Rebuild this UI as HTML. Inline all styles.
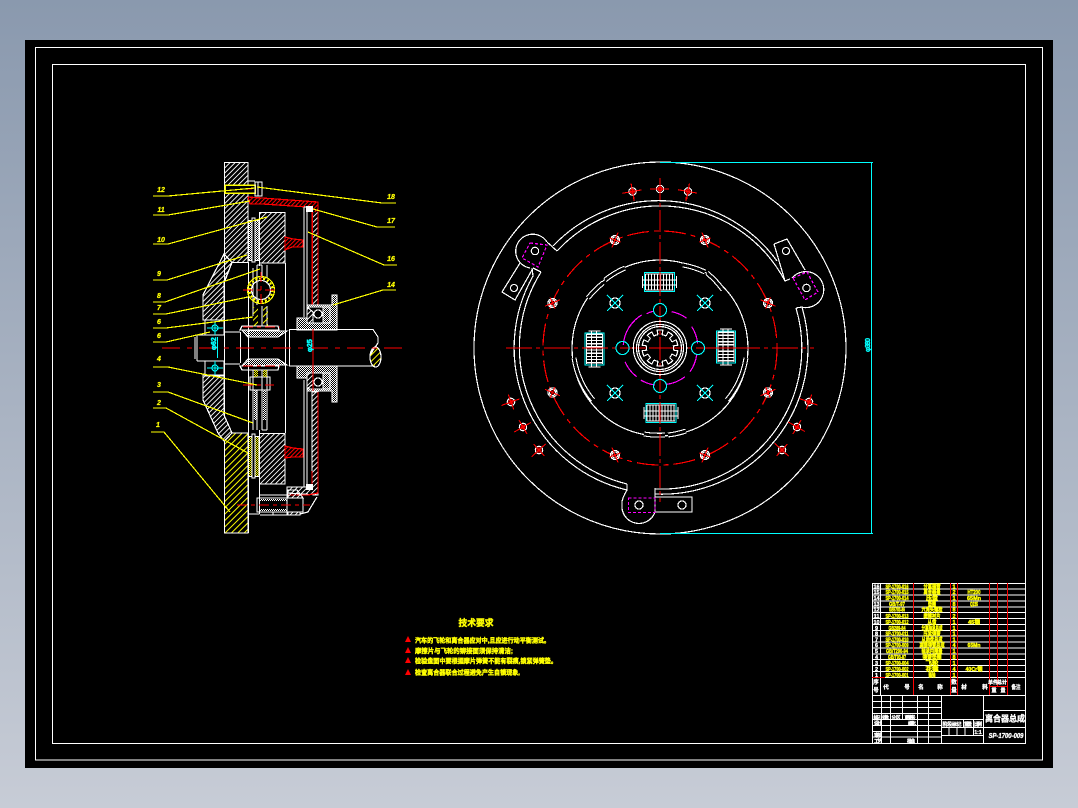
<!DOCTYPE html>
<html><head><meta charset="utf-8"><style>
html,body{margin:0;padding:0;width:1078px;height:808px;overflow:hidden;background:linear-gradient(#8a99ae,#c7ccd6)}
svg{position:absolute;left:0;top:0;display:block}
svg *{shape-rendering:crispEdges}
text{font-family:"Liberation Sans","Noto Sans CJK SC",sans-serif}
.y{fill:#ff0;stroke:#ff0;stroke-width:.4;font-weight:700;text-anchor:middle;font-size:5.5px}
.w{fill:#fff;stroke:#fff;stroke-width:.35;font-weight:700;text-anchor:middle;font-size:5.5px}
.l{fill:#ff0;stroke:#ff0;stroke-width:.25;font-weight:700;font-style:italic;text-anchor:middle;font-size:7px}
.t{fill:#ff0;stroke:#ff0;stroke-width:.4;font-weight:700;font-size:6.5px}
</style></head><body>
<svg width="1078" height="808" viewBox="0 0 1078 808" xmlns="http://www.w3.org/2000/svg">
<defs>
<pattern id="hw" width="3.6" height="3.6" patternUnits="userSpaceOnUse" patternTransform="rotate(45)"><line x1="0.5" y1="0" x2="0.5" y2="3.6" stroke="#fff" stroke-width="1.1"/></pattern>
<pattern id="hy" width="4.5" height="4.5" patternUnits="userSpaceOnUse" patternTransform="rotate(45)"><line x1="0.5" y1="0" x2="0.5" y2="4.5" stroke="#ff0" stroke-width="1.1"/></pattern>
<pattern id="hr" width="3" height="3" patternUnits="userSpaceOnUse" patternTransform="rotate(45)"><line x1="0.5" y1="0" x2="0.5" y2="3" stroke="#f00" stroke-width="1.3"/></pattern>
<pattern id="dw" width="2" height="2" patternUnits="userSpaceOnUse"><rect width="1" height="1" fill="#fff"/><rect x="1" y="1" width="1" height="1" fill="#fff"/></pattern>
<pattern id="dy" width="2" height="2" patternUnits="userSpaceOnUse"><rect width="1.2" height="1.2" fill="#ff0"/><rect x="1" y="1" width="1.2" height="1.2" fill="#ff0"/></pattern>
<g id="spr" fill="none">
<rect x="-15" y="-9.5" width="30" height="19" stroke="#0ff" stroke-width="1.2"/>
<path stroke="#fff" d="M-17-6V6M-14-8V8M-11-8V8M-8-8V8M-5-8V8M-2-8V8M1-8V8M4-8V8M7-8V8M10-8V8M13-8V8M17-6V6M-17-2H17M-17 3H17M-14-8H14M-14 8H14"/>
</g>
<g id="xm" fill="none"><circle r="5" stroke="#fff" stroke-width="1.2"/><path stroke="#0ff" stroke-width="1.1" d="M-6-6L6 6M-6 6L6-6M-8-8L-5-5M8-8L5-5M-8 8L-5 5M8 8L5 5"/></g>
<g id="bolt" fill="none"><circle r="4.5" stroke="#fff" stroke-width="1.2"/><circle r="3" stroke="#fff"/><path stroke="#f00" stroke-width="1.1" d="M-8 0H8M0-6V6"/></g>
<g id="hole" fill="none"><circle r="3.7" stroke="#fff" stroke-width="1.2"/><circle r="2" stroke="#f00"/><path stroke="#f00" stroke-width="1.1" d="M-10 0H9M0-8V8"/></g>
<path id="tooth" d="M-2.11-13.33L-2.82-17.78A18 18 0 0 1 2.82-17.78L2.11-13.33A13.5 13.5 0 0 1 6.13-12.03"/>
<path id="slots" d="M588 298A88 88 0 0 1 603 283M605 280A88 88 0 0 1 625 268M683 265A88 88 0 0 1 705 272M707 273A88 88 0 0 1 723 290M574 358A88 88 0 0 0 593 400M746 358A88 88 0 0 1 727 400M644 434A88 88 0 0 0 665 435M668 435A88 88 0 0 0 686 431"/>
</defs>
<rect x="25" y="40" width="1028" height="728" fill="#000"/>
<g fill="none" stroke="#fff">
<rect x="35.5" y="47.5" width="1007" height="712.5" stroke-width="1.2"/>
<rect x="52.5" y="64.5" width="973" height="679" stroke-width="1.2"/>
</g>

<!-- SECTION VIEW -->
<g stroke-width="1.2">
<!-- flywheel -->
<path d="M224.500 162.500H248V262.500H232L224.500 282Z" fill="url(#hw)" stroke="#fff"/>
<path d="M232 433H248V533H224.500V441Z" fill="url(#hy)" stroke="#fff"/>
<!-- cover hub -->
<path d="M224 254L203 295V320H224V282L232 262.500Z" fill="url(#hw)" stroke="#fff"/>
<path d="M203 375V400L218 433L224 441L232 433L224 415V375Z" fill="url(#hw)" stroke="#fff"/>
<!-- pressure plate -->
<rect x="259.500" y="212.500" width="25.500" height="50.500" fill="url(#hw)" stroke="#fff"/>
<rect x="259.500" y="433.500" width="25.500" height="50.500" fill="url(#hw)" stroke="#fff"/>
<!-- friction -->
<rect x="248.500" y="220.500" width="10.500" height="40" fill="url(#dw)" stroke="#fff"/>
<rect x="248.500" y="436.500" width="10.500" height="40" fill="url(#dy)" stroke="#fff"/>
<rect x="252" y="218" width="3" height="44" fill="#000" stroke="#fff"/>
<rect x="252" y="434" width="3" height="44" fill="#000" stroke="#fff"/>
<!-- verticals -->
<path fill="none" stroke="#fff" d="M248.500 262V436M224.500 282V415M285.500 263V433M259.500 263V266M259.500 484V514M248.500 514H259.500M248.500 476V533M259.500 430V436"/>
<!-- clutch cover -->
<path d="M248 197L262 198L290 200L318 202V305H312V212L307 207L262 204L250 204Z" fill="url(#hr)" stroke="#f00"/>
<rect x="312.500" y="212" width="5.500" height="93" fill="#000"/>
<rect x="312.500" y="212" width="5.500" height="93" fill="url(#hw)" stroke="none"/>
<path d="M312.500 212V305M318 202V305" fill="none" stroke="#f00"/>
<path d="M312 392V487H287V493L318 495L318 392Z" fill="url(#hw)" stroke="#fff"/>
<path d="M318 392V493L308 495H287M312 471V487" fill="none" stroke="#f00"/>
<path d="M300 514L308 512L317 497" fill="none" stroke="#fff"/>
<!-- red wedge -->
<path d="M285 237L293 239L303 240V247H292L285 250Z" fill="url(#hr)" stroke="#f00"/>
<path d="M285 446L293 448L303 449V457H292L285 458Z" fill="url(#hr)" stroke="#f00"/>
<!-- lever -->
<path fill="none" stroke="#fff" d="M304 207V317M307 207V317M304 207H307M304 380V487M307 380V487M304 487H307"/>
<rect x="306" y="206" width="7" height="6" fill="#fff"/>
<rect x="306" y="484" width="7" height="6" fill="#fff"/>
<!-- release bearing -->
<path d="M297 318V330H337V295H332V305H307V318Z" fill="url(#dw)" stroke="#fff"/>
<path d="M297 366V378H307V391H332V402H337V366Z" fill="url(#dw)" stroke="#fff"/>
<rect x="307" y="307" width="23" height="16" fill="#000" stroke="#fff"/>
<rect x="307" y="373" width="23" height="16" fill="#000" stroke="#fff"/>
<path d="M307 307L313 312V323H307Z" fill="url(#hw)" stroke="#fff"/>
<path d="M307 389L313 384V373H307Z" fill="url(#hw)" stroke="#fff"/>
<path d="M323 307H330V323H323Z" fill="url(#dw)" stroke="#fff"/>
<path d="M323 373H330V389H323Z" fill="url(#dw)" stroke="#fff"/>
<circle cx="318" cy="314" r="4" fill="#000" stroke="#fff"/>
<circle cx="318" cy="382" r="4" fill="#000" stroke="#fff"/>
<!-- shaft -->
<path fill="none" stroke="#fff" d="M289 329.500H373L378 337V343L373 350L370 356M289 366H375M289.500 329V366M197 335H224M224 332H240M197 361H224M224 364H240M195 337V359M197 335V361M240.500 332V363"/>
<ellipse cx="375.500" cy="357" rx="5.500" ry="10" fill="url(#hy)" stroke="#fff"/>
<!-- spline hub -->
<path d="M242 326H278L279 330H240Z" fill="none" stroke="#fff"/>
<path d="M242 370H278L279 366H240Z" fill="none" stroke="#fff"/>
<path d="M242 330L248 337H278L287 331H279Z" fill="url(#dw)" stroke="#fff"/>
<path d="M242 366L248 359H278L287 365H279Z" fill="url(#dw)" stroke="#fff"/>
<!-- hub flange -->
<path fill="none" stroke="#fff" d="M253 268V316M257 265V305M262 265V278M262 306V326M267 265V278M267 306V326M257 265H262M250 377H270V390H250ZM253 370V430M257 390V430M262 370V430M267 370V430M262 430H267"/>
<rect x="253" y="307" width="5" height="19" fill="url(#hy)"/><rect x="263" y="307" width="5" height="19" fill="url(#hy)"/>
<rect x="254" y="370" width="4" height="7" fill="url(#dy)"/><rect x="263" y="370" width="4" height="7" fill="url(#dy)"/>
<rect x="263" y="390" width="3" height="30" fill="url(#dw)"/>
<rect x="254" y="390" width="3" height="30" fill="url(#dw)"/>
<circle cx="261" cy="290" r="11.500" fill="none" stroke="#ff0" stroke-width="2.400" stroke-dasharray="2 2"/>
<circle cx="261" cy="290" r="9.500" fill="none" stroke="#fff"/>
<circle cx="261" cy="290" r="13.500" fill="none" stroke="#ff0"/>
<!-- bolt -->
<rect x="225" y="185" width="30" height="8" fill="#000" stroke="#ff0" stroke-width="1.500"/>
<path d="M255 182H262V196H255ZM258 182V196M248 181H255" fill="none" stroke="#fff"/>
<!-- lower bolt -->
<path fill="none" stroke="#fff" d="M257 498H303V512H257ZM260 495H287M260 515H299M287 490V515M297 490L287 490M273 512V515"/>
<path d="M288 490H297L303 498H288Z" fill="url(#hw)" stroke="#fff"/>
<path d="M288 512H300V515H288Z" fill="url(#hw)" stroke="#fff"/>
<rect x="260" y="499" width="27" height="2" fill="url(#dw)"/><rect x="260" y="509" width="27" height="2" fill="url(#dw)"/>
<!-- left small boxes -->
<path fill="none" stroke="#fff" d="M205 320H224V335H205ZM205 361H224V376H205Z"/>
<path fill="none" stroke="#0ff" d="M207 328H223M215 322V335M207 368H223M215 361V375"/>
<circle cx="215" cy="328" r="3" fill="none" stroke="#0ff"/><circle cx="215" cy="368" r="3" fill="none" stroke="#0ff"/>
<path stroke="#0ff" d="M217.500 337V358" fill="none"/>
<!-- red centerlines -->
<path fill="none" stroke="#f00" stroke-width="1.300" stroke-dasharray="18 7 5 7" d="M162 348H407"/>
<path fill="none" stroke="#f00" d="M313 329V391"/>
<path fill="none" stroke="#f00" stroke-dasharray="10 4 4 4" d="M243 189H252M243 290H279M261 272V308M243 327H280M243 366H280M243 385H274M237 505H310"/>
<!-- leader lines -->
<g fill="none" stroke="#ff0" stroke-width="1.200">
<path d="M153 196H168L255 188"/><path d="M396 203H382L257 187"/>
<path d="M153 215H168L250 201"/><path d="M395 227H377L313 209"/>
<path d="M153 244H168L267 217"/><path d="M397 265H384L308 232"/>
<path d="M153 280H167L247 255"/><path d="M396 290H383L333 305"/>
<path d="M153 302H165L260 269"/><path d="M153 314H166L248 297"/>
<path d="M153 328H166L253 317"/><path d="M153 342H166L210 332"/>
<path d="M153 367H168L257 385"/><path d="M153 392H168L253 423"/>
<path d="M153 408H166L248 453"/><path d="M151 432H164L230 512"/>
</g>
</g>
<g>
<text class="l" x="161" y="192">12</text><text class="l" x="161" y="212">11</text><text class="l" x="161" y="242">10</text><text class="l" x="159" y="276">9</text><text class="l" x="159" y="298">8</text><text class="l" x="159" y="310">7</text><text class="l" x="159" y="324">6</text><text class="l" x="159" y="338">6</text><text class="l" x="159" y="361">4</text><text class="l" x="159" y="387">3</text><text class="l" x="159" y="405">2</text><text class="l" x="158" y="427">1</text>
<text class="l" x="391" y="199">18</text><text class="l" x="391" y="223">17</text><text class="l" x="391" y="261">16</text><text class="l" x="391" y="287">14</text>
<text transform="translate(216,350) rotate(-90)" fill="#0ff" stroke="#0ff" stroke-width=".5" font-size="7" font-weight="700">φ62</text>
<text transform="translate(312,352) rotate(-90)" fill="#0ff" stroke="#0ff" stroke-width=".5" font-size="7" font-weight="700">φ25</text>
</g>

<!-- FRONT VIEW -->
<g fill="none" stroke-width="1.200">
<circle cx="660" cy="348" r="186" stroke="#fff"/>
<path stroke="#fff" d="M553 246A146 146 0 0 1 777 261M557 251A141 141 0 0 1 785 281M533 276A146 146 0 0 0 627 490M541 272A141 141 0 0 0 627 484M802 307A146 146 0 0 1 655 494M796 308A141 141 0 0 1 655 489"/>
<!-- lobes / tabs -->
<path stroke="#fff" d="M547 242L557 251M547 242A17 17 0 1 0 530 268M533 268L541 272M533 276L532 268"/>
<path stroke="#fff" d="M520 263L502 292L515 300L532 270"/>
<circle cx="535" cy="251" r="3.700" stroke="#fff"/><circle cx="514" cy="288" r="3.500" stroke="#fff"/>
<path stroke="#f0f" stroke-dasharray="3 2" d="M530 243L547 245L538 267L522 258Z"/>
<path stroke="#fff" d="M796 308L802 307M801 307A18 18 0 1 0 792 278M774 244L787 239L805 270M774 244L785 281L790 279"/>
<circle cx="806.500" cy="288" r="3.700" stroke="#fff"/><circle cx="786" cy="251" r="3.500" stroke="#fff"/>
<path stroke="#f0f" stroke-dasharray="3 2" d="M793 278L807 272L818 292L805 300Z"/>
<path stroke="#fff" d="M627 484V490Q621 500 622 505A17 17 0 0 0 655 512M655 488V512H692V497H655"/>
<circle cx="639" cy="505" r="4" stroke="#fff"/><circle cx="682" cy="505" r="4" stroke="#fff"/>
<rect x="628.500" y="498" width="26.500" height="14.500" stroke="#f0f" stroke-dasharray="3 2"/>
<!-- inner disc -->
<circle cx="660" cy="348" r="88" stroke="#fff"/>
<use href="#slots" stroke="#fff" stroke-width="5"/>
<use href="#slots" stroke="#000" stroke-width="2.800"/>
<!-- red dashed circle -->
<circle cx="660" cy="348" r="117" stroke="#f00" stroke-dasharray="22 5 5 5"/>
<!-- centerlines -->
<path stroke="#f00" stroke-dasharray="26 4 4 4" d="M506 348H814"/>
<path stroke="#f00" stroke-dasharray="22 3 4 3" d="M660 178V502"/>
<!-- magenta arcs -->
<path stroke="#f0f" d="M641.700 315A38 38 0 0 0 623.300 345M625 361.700A38 38 0 0 0 636.700 376.700M640.700 380A38 38 0 0 0 655 385M666.700 384.300A38 38 0 0 0 685 376.700M690 371.700A38 38 0 0 0 696.700 355M697.700 343.300A38 38 0 0 0 691.700 326.700M686.700 318.300A38 38 0 0 0 671.700 311.700M654 311A38 38 0 0 0 646.700 313.700"/>
<!-- cyan bolt circles -->
<g stroke="#0ff"><circle cx="660" cy="310" r="6.500"/><circle cx="622.500" cy="348" r="6.500"/><circle cx="660" cy="386" r="6.500"/><circle cx="698" cy="348" r="6.500"/></g>
<!-- hub -->
<g stroke="#fff"><circle cx="660" cy="348" r="26.700"/><circle cx="660" cy="348" r="23.500"/><circle cx="660" cy="348" r="21.500"/>
<g transform="translate(660 348)">
<use href="#tooth"/><use href="#tooth" transform="rotate(36)"/><use href="#tooth" transform="rotate(72)"/><use href="#tooth" transform="rotate(108)"/><use href="#tooth" transform="rotate(144)"/><use href="#tooth" transform="rotate(180)"/><use href="#tooth" transform="rotate(216)"/><use href="#tooth" transform="rotate(252)"/><use href="#tooth" transform="rotate(288)"/><use href="#tooth" transform="rotate(324)"/>
</g></g>
<path stroke="#f00" d="M649 348H671M660 337V359"/>
<!-- springs -->
<use href="#spr" transform="translate(659.500 282)"/>
<use href="#spr" transform="translate(661 413)"/>
<use href="#spr" transform="translate(594.500 349) rotate(90) scale(1.060 1)"/>
<use href="#spr" transform="translate(726 347) rotate(90) scale(1.060 1)"/>
<path stroke="#f00" d="M660 272V292M660 403V423M584 348H606M715 348H737"/>
<!-- X marks -->
<use href="#xm" transform="translate(615 303)"/><use href="#xm" transform="translate(705 303)"/><use href="#xm" transform="translate(615 393)"/><use href="#xm" transform="translate(705 393)"/>
<!-- bolts -->
<use href="#bolt" transform="translate(615 240) rotate(-68)"/>
<use href="#bolt" transform="translate(552.500 303) rotate(-23)"/>
<use href="#bolt" transform="translate(705 240) rotate(68)"/>
<use href="#bolt" transform="translate(768 303) rotate(23)"/>
<use href="#bolt" transform="translate(552.500 392.500) rotate(23)"/>
<use href="#bolt" transform="translate(615 455) rotate(68)"/>
<use href="#bolt" transform="translate(768 392.500) rotate(-23)"/>
<use href="#bolt" transform="translate(705 455) rotate(-68)"/>
<!-- holes -->
<use href="#hole" transform="translate(660 189)"/>
<use href="#hole" transform="translate(632.500 191.500) rotate(-10)"/>
<use href="#hole" transform="translate(688 191.500) rotate(10)"/>
<use href="#hole" transform="translate(511 402) rotate(-20)"/>
<use href="#hole" transform="translate(523 427) rotate(-30)"/>
<use href="#hole" transform="translate(539 450) rotate(-43)"/>
<use href="#hole" transform="translate(809 402) rotate(20)"/>
<use href="#hole" transform="translate(797 427) rotate(30)"/>
<use href="#hole" transform="translate(782 450) rotate(43)"/>
<path stroke="#f00" d="M634 201V197M686 201V197"/>
<!-- dimension -->
<path stroke="#0ff" d="M660 162.500H873M871.500 162V534M660 533.500H873"/>
</g>
<text transform="translate(870,352) rotate(-90)" fill="#0ff" stroke="#0ff" stroke-width=".4" font-size="7" font-weight="700" textLength="14">φ380</text>

<!-- Tech requirements -->
<text x="476" y="626" class="y" style="font-size:9px" textLength="35" lengthAdjust="spacingAndGlyphs">技术要求</text>
<g>
<path fill="#f00" d="M405 642L408 636L411 642Z"/><path fill="#f00" d="M405 653L408 647L411 653Z"/><path fill="#f00" d="M405 663L408 657L411 663Z"/><path fill="#f00" d="M405 675L408 669L411 675Z"/>
<text class="t" x="415" y="642.500" textLength="135" lengthAdjust="spacingAndGlyphs">汽车的飞轮和离合器应对中,且应进行动平衡测试。</text>
<text class="t" x="415" y="653" textLength="98" lengthAdjust="spacingAndGlyphs">摩擦片与飞轮的铆接面须保持清洁;</text>
<text class="t" x="415" y="663" textLength="142" lengthAdjust="spacingAndGlyphs">检验盘面中要根据摩片弹簧不能有裂痕,锁紧弹簧垫。</text>
<text class="t" x="415" y="674.500" textLength="105" lengthAdjust="spacingAndGlyphs">检查离合器联合过程避免产生自锁现象,</text>
</g>

<!-- Title block -->
<g fill="none" stroke="#fff">
<rect x="872.500" y="583.500" width="153" height="160"/>
<path d="M873 589H1025M873 595H1025M873 601H1025M873 607H1025M873 612.500H1025M873 618.500H1025M873 624.500H1025M873 630.500H1025M873 636H1025M873 642H1025M873 648H1025M873 654H1025M873 659.500H1025M873 665.500H1025M873 671.500H1025M885 677.500H1025M873 695.500H1025"/>
<path d="M880.500 583V695"/>
<path d="M873 701.500H941M873 707.500H941M873 713.500H941M873 719.500H983M873 725.500H941M873 731.500H941M873 737H941M941 727.500H1025M941 735.500H983M983 710.500H1025"/>
<path d="M881.500 695V743M890.500 695V743M902.500 695V719M917.500 695V743M928.500 695V743M941.500 695V743M983.500 695V743M963.500 719V727M973.500 719V735M949 727V735M957 727V735M965 727V735"/>
<g stroke="#f00" stroke-width="1.300"><path d="M913.500 583V695M950.500 583V695M957.500 583V695M989.500 583V695M1007.500 583V695M997.500 583V686M989 686.500H1008M872 677.500H885"/></g>
</g>
<g class="rows">
<text class="w" x="876.500" y="588.500">16</text><text class="w" x="876.500" y="594">15</text><text class="w" x="876.500" y="600">14</text><text class="w" x="876.500" y="606">13</text><text class="w" x="876.500" y="611.500">12</text><text class="w" x="876.500" y="618">11</text><text class="w" x="876.500" y="624">10</text><text class="w" x="876.500" y="630">9</text><text class="w" x="876.500" y="635.500">8</text><text class="w" x="876.500" y="641.500">7</text><text class="w" x="876.500" y="647">6</text><text class="w" x="876.500" y="653">5</text><text class="w" x="876.500" y="659">4</text><text class="w" x="876.500" y="665">3</text><text class="w" x="876.500" y="671">2</text><text class="w" x="876.500" y="677">1</text>
<text class="y" x="897" y="588.500" textLength="23" lengthAdjust="spacingAndGlyphs">SP-1700-016</text><text class="y" x="897" y="594" textLength="23" lengthAdjust="spacingAndGlyphs">SP-1700-015</text><text class="y" x="897" y="600" textLength="23" lengthAdjust="spacingAndGlyphs">SP-1700-014</text><text class="y" x="897" y="606" textLength="16" lengthAdjust="spacingAndGlyphs">GB/T-97</text><text class="y" x="897" y="611.500" textLength="16" lengthAdjust="spacingAndGlyphs">GB5783-86</text><text class="y" x="897" y="618" textLength="23" lengthAdjust="spacingAndGlyphs">SP-1700-013</text><text class="y" x="897" y="624" textLength="23" lengthAdjust="spacingAndGlyphs">SP-1700-012</text><text class="y" x="897" y="630" textLength="17" lengthAdjust="spacingAndGlyphs">GB289-84</text><text class="y" x="897" y="635.500" textLength="23" lengthAdjust="spacingAndGlyphs">SP-1700-011</text><text class="y" x="897" y="641.500" textLength="23" lengthAdjust="spacingAndGlyphs">SP-1700-010</text><text class="y" x="897" y="647" textLength="23" lengthAdjust="spacingAndGlyphs">SP-1700-009</text><text class="y" x="897" y="653" textLength="22" lengthAdjust="spacingAndGlyphs">GB/T290-94</text><text class="y" x="897" y="659" textLength="18" lengthAdjust="spacingAndGlyphs">GB/T93-87</text><text class="y" x="897" y="665" textLength="23" lengthAdjust="spacingAndGlyphs">SP-1700-004</text><text class="y" x="897" y="671" textLength="23" lengthAdjust="spacingAndGlyphs">SP-1700-002</text><text class="y" x="897" y="677" textLength="23" lengthAdjust="spacingAndGlyphs">SP-1700-001</text>
<text class="y" x="932" y="588.500" textLength="17" lengthAdjust="spacingAndGlyphs">分离摆臂</text><text class="y" x="932" y="594" textLength="17" lengthAdjust="spacingAndGlyphs">离合器盖</text><text class="y" x="932" y="600" textLength="12" lengthAdjust="spacingAndGlyphs">压盘</text><text class="y" x="932" y="606" textLength="8" lengthAdjust="spacingAndGlyphs">垫圈</text><text class="y" x="932" y="611.500" textLength="21" lengthAdjust="spacingAndGlyphs">六角头螺栓</text><text class="y" x="932" y="618" textLength="17" lengthAdjust="spacingAndGlyphs">摩擦衬片</text><text class="y" x="932" y="624" textLength="9" lengthAdjust="spacingAndGlyphs">从盘</text><text class="y" x="932" y="630" textLength="21" lengthAdjust="spacingAndGlyphs">分离轴承总成</text><text class="y" x="932" y="635.500" textLength="17" lengthAdjust="spacingAndGlyphs">压紧弹簧</text><text class="y" x="932" y="641.500" textLength="21" lengthAdjust="spacingAndGlyphs">从动盘总成</text><text class="y" x="932" y="647" textLength="25" lengthAdjust="spacingAndGlyphs">减振弹簧总成</text><text class="y" x="932" y="653" textLength="21" lengthAdjust="spacingAndGlyphs">轴承内圈盖</text><text class="y" x="932" y="659" textLength="19" lengthAdjust="spacingAndGlyphs">弹簧垫圈</text><text class="y" x="932" y="665" textLength="13" lengthAdjust="spacingAndGlyphs">飞轮</text><text class="y" x="932" y="671" textLength="13" lengthAdjust="spacingAndGlyphs">花键</text><text class="y" x="932" y="677" textLength="7" lengthAdjust="spacingAndGlyphs">输轴</text>
<text class="y" x="954" y="588.500">1</text><text class="y" x="954" y="594">2</text><text class="y" x="954" y="600">1</text><text class="y" x="954" y="606">8</text><text class="y" x="954" y="611.500">8</text><text class="y" x="954" y="618">2</text><text class="y" x="954" y="624">1</text><text class="y" x="954" y="630">1</text><text class="y" x="954" y="635.500">1</text><text class="y" x="954" y="641.500">1</text><text class="y" x="954" y="647">4</text><text class="y" x="954" y="653">1</text><text class="y" x="954" y="659">8</text><text class="y" x="954" y="665">1</text><text class="y" x="954" y="671">4</text><text class="y" x="954" y="677">1</text>
<text class="y" x="974" y="594" textLength="13" lengthAdjust="spacingAndGlyphs">HT200</text><text class="y" x="974" y="600" textLength="14" lengthAdjust="spacingAndGlyphs">65Mn</text><text class="y" x="974" y="606" textLength="8" lengthAdjust="spacingAndGlyphs">Q235</text><text class="y" x="974" y="624" textLength="12" lengthAdjust="spacingAndGlyphs">45钢</text><text class="y" x="974" y="647" textLength="13" lengthAdjust="spacingAndGlyphs">65Mn</text><text class="y" x="974" y="671" textLength="17" lengthAdjust="spacingAndGlyphs">40Cr钢</text>
</g>
<g>
<text class="w" x="876" y="684">序</text><text class="w" x="876" y="692">号</text>
<text class="w" x="886" y="689">代</text><text class="w" x="907" y="689">号</text>
<text class="w" x="921" y="689">名</text><text class="w" x="940" y="689">称</text>
<text class="w" x="954" y="684">数</text><text class="w" x="954" y="692">量</text>
<text class="w" x="964" y="689">材</text><text class="w" x="985" y="689">料</text>
<text class="w" x="993" y="684" style="font-size:5px">单件</text><text class="w" x="1002" y="684" style="font-size:5px">总计</text>
<text class="w" x="994" y="692" style="font-size:5px">重</text><text class="w" x="1003" y="692" style="font-size:5px">量</text>
<text class="w" x="1016" y="689" textLength="9" lengthAdjust="spacingAndGlyphs">备注</text>
<text class="w" x="877" y="719" style="font-size:4.500px" textLength="7">标记</text><text class="w" x="885.500" y="719" style="font-size:4.500px" textLength="7">处数</text><text class="w" x="896" y="719" style="font-size:4.500px" textLength="9">分区</text><text class="w" x="910" y="719" style="font-size:4.500px" textLength="11">更改文件号</text>
<text class="w" x="878" y="725" style="font-size:5px" textLength="8">设计</text><text class="w" x="912" y="725" style="font-size:4.500px" textLength="8">标准化</text>
<text class="w" x="878" y="737" style="font-size:5px" textLength="8">审核</text><text class="w" x="878" y="743" style="font-size:5px" textLength="8">工艺</text><text class="w" x="911" y="743" style="font-size:5px" textLength="8">批准</text>
<text class="w" x="952" y="726" style="font-size:5px" textLength="19">阶段标记</text><text class="w" x="968" y="726" style="font-size:5px" textLength="8">重量</text><text class="w" x="978" y="726" style="font-size:5px" textLength="8">比例</text>
<text class="w" x="978" y="734" style="font-size:5px">1:1</text>
<text class="w" x="1005" y="721.500" style="font-size:8.500px" textLength="40" lengthAdjust="spacingAndGlyphs">离合器总成</text>
<text class="w" x="1006" y="738" style="font-size:7px;font-style:italic" textLength="35" lengthAdjust="spacingAndGlyphs">SP-1700-009</text>
</g>
</svg>
</body></html>
